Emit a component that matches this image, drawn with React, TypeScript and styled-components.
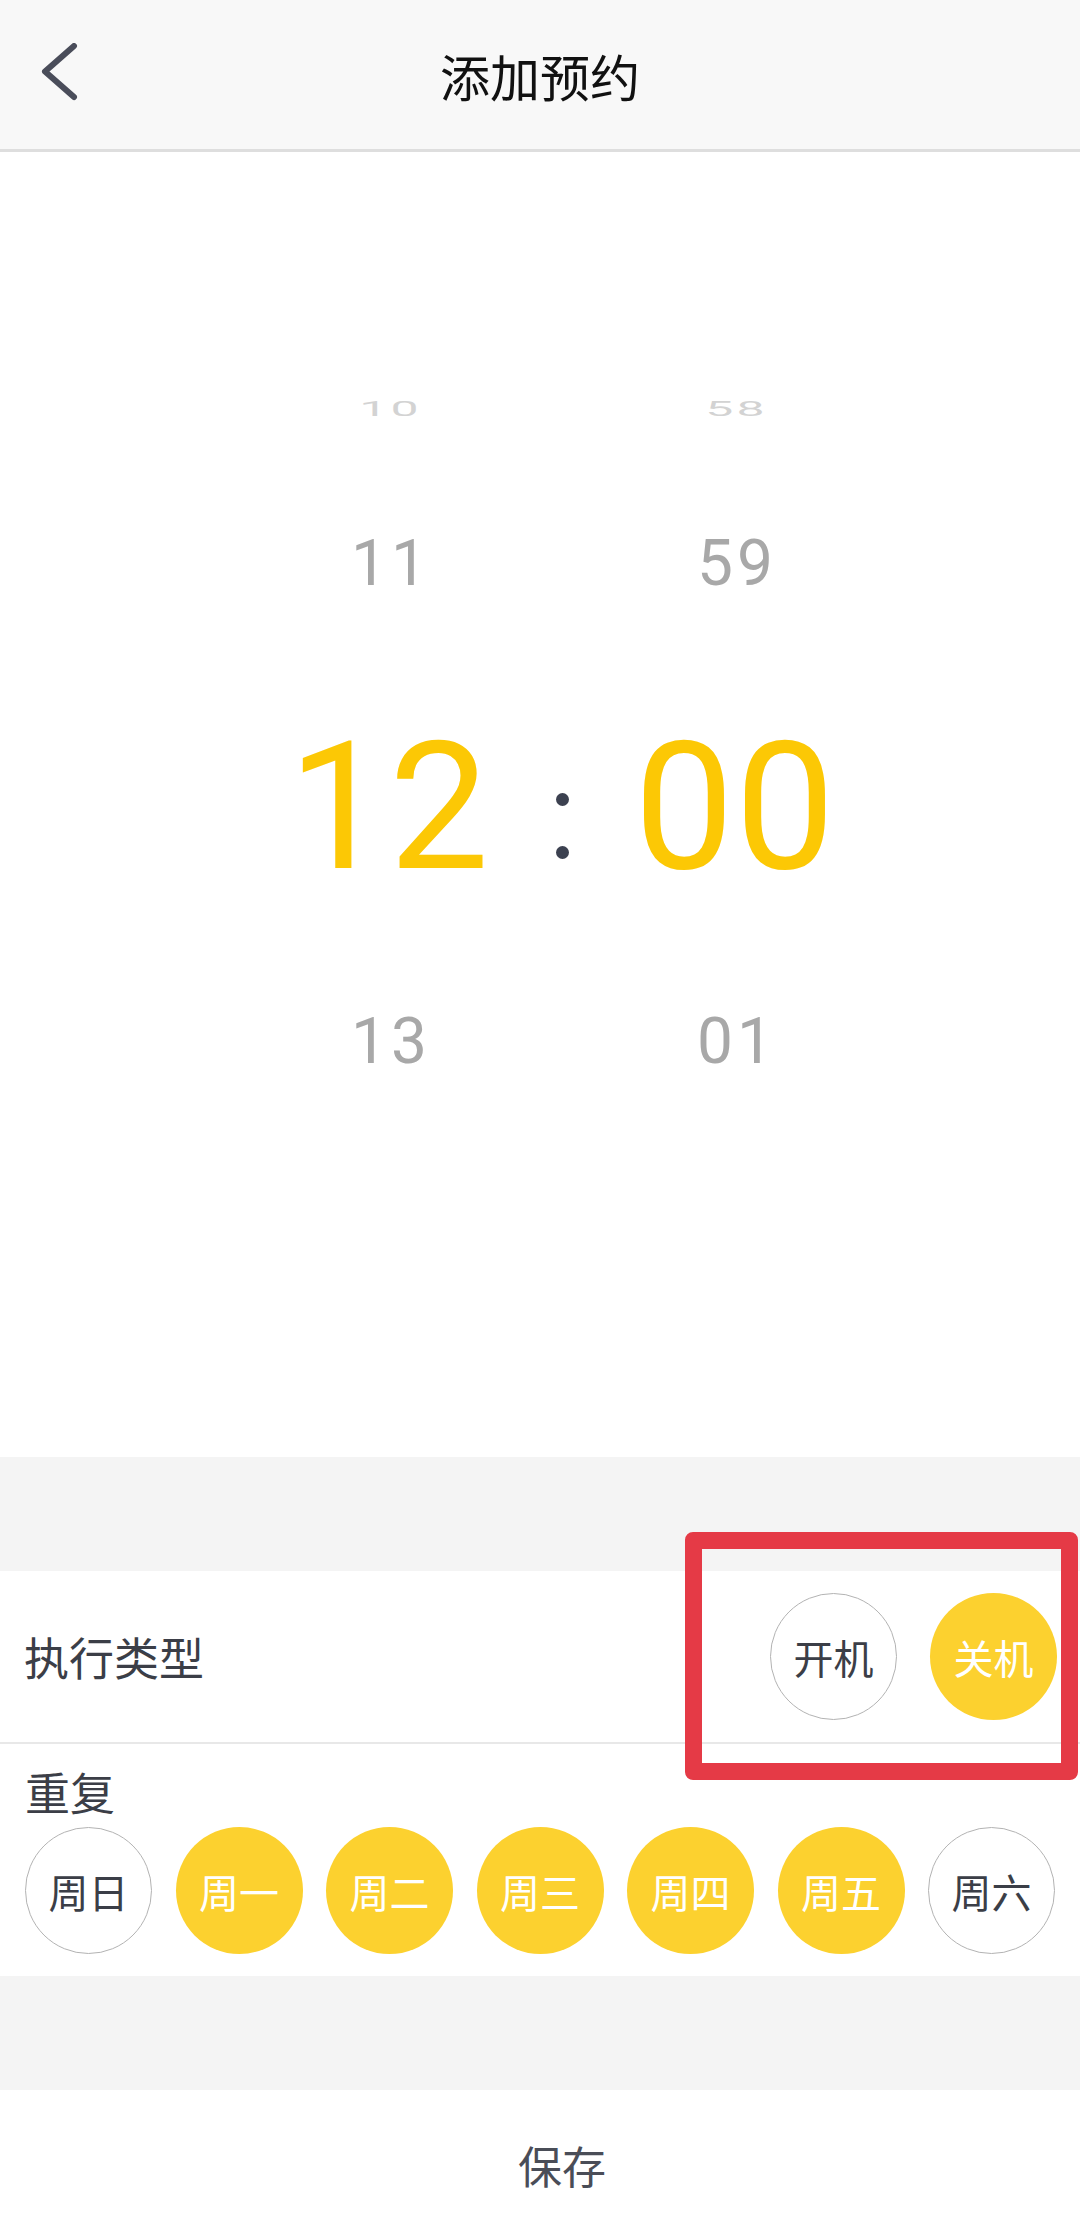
import styled, { createGlobalStyle, css } from "styled-components";

const GlobalStyle = createGlobalStyle`
  html, body {
    margin: 0;
    padding: 0;
    background: #ffffff;
  }
`;

const Page = styled.div`
  position: relative;
  width: 1080px;
  background: #ffffff;
  font-family: "Noto Sans CJK SC", "Noto Sans", sans-serif;
`;

const Header = styled.header`
  display: grid;
  grid-template-columns: 1fr auto 1fr;
  align-items: center;
  height: 152px;
  box-sizing: border-box;
  background: #f8f8f8;
  border-bottom: 3px solid #dedede;
`;

const BackButton = styled.button`
  justify-self: start;
  margin: 0 0 6px 40px;
  padding: 0;
  border: none;
  background: none;
  display: flex;
`;

const Title = styled.h1`
  margin: 0;
  font-size: 50px;
  font-weight: 400;
  color: #111111;
  line-height: 1;
`;

const Picker = styled.section`
  height: 1305px;
  padding-top: 217px;
  box-sizing: border-box;
`;

const WheelRow = styled.div<{ $h: number }>`
  display: grid;
  grid-template-columns: 260px 86px 260px;
  padding-left: 259px;
  height: ${(p) => p.$h}px;
  align-items: center;
  justify-items: center;
`;

const tones = {
  far: css`
    font-size: 64px;
    letter-spacing: 4px;
    padding-left: 4px;
    color: #d3d3d3;
    transform: scale(0.78, 0.32);
  `,
  near: css`
    font-size: 64px;
    letter-spacing: 4px;
    padding-left: 4px;
    color: #a8a8a8;
  `,
  active: css`
    font-size: 178px;
    letter-spacing: 1px;
    color: #fcc805;
  `,
};

const Digit = styled.span<{ $tone: keyof typeof tones }>`
  font-family: Roboto, "Liberation Sans", sans-serif;
  line-height: 1;
  ${(p) => tones[p.$tone]}
`;

const Colon = styled.div`
  display: flex;
  flex-direction: column;
  gap: 40px;
  padding-top: 38px;
`;

const Dot = styled.span`
  width: 13px;
  height: 13px;
  border-radius: 50%;
  background: #3c4150;
`;

const Band = styled.div<{ $h: number }>`
  height: ${(p) => p.$h}px;
  background: #f4f4f4;
`;

const TypeRow = styled.div`
  display: flex;
  align-items: center;
  justify-content: space-between;
  height: 173px;
  padding: 0 23px 0 24px;
  box-sizing: border-box;
  border-bottom: 2px solid #e8e8e8;
`;

const Label = styled.span`
  font-size: 45px;
  line-height: 56px;
  color: #3b3e47;
`;

const ToggleGroup = styled.div`
  display: flex;
  gap: 33px;
`;

const Chip = styled.div<{ $on: boolean }>`
  width: 127px;
  height: 127px;
  border-radius: 50%;
  box-sizing: border-box;
  display: flex;
  align-items: center;
  justify-content: center;
  font-size: 40px;
  line-height: 1;
  ${(p) =>
    p.$on
      ? css`
          background: #fcd12f;
          color: #ffffff;
        `
      : css`
          border: 1.5px solid #b3b3b3;
          color: #3b3e47;
        `}
`;

const RepeatSection = styled.div`
  display: flex;
  flex-direction: column;
  gap: 7px;
  padding: 20px 25px 22px;
`;

const WeekRow = styled.div`
  display: flex;
  justify-content: space-between;
`;

const Save = styled.button`
  display: flex;
  align-items: center;
  justify-content: center;
  width: 100%;
  height: 150px;
  padding: 0 0 0 44px;
  border: none;
  background: #ffffff;
  font-family: inherit;
  font-size: 44px;
  color: #4a4d57;
`;

const Highlight = styled.div`
  position: absolute;
  left: 685px;
  top: 1532px;
  width: 393px;
  height: 248px;
  box-sizing: border-box;
  border: 17px solid #e53a46;
  border-radius: 8px;
  pointer-events: none;
`;

const days = [
  { name: "周日", on: false },
  { name: "周一", on: true },
  { name: "周二", on: true },
  { name: "周三", on: true },
  { name: "周四", on: true },
  { name: "周五", on: true },
  { name: "周六", on: false },
];

export default function App() {
  return (
    <Page>
      <GlobalStyle />
      <Header>
        <BackButton aria-label="返回">
          <svg width="40" height="58" viewBox="0 0 40 58">
            <path
              d="M34 3 L5 28.5 L34 54"
              fill="none"
              stroke="#4a4d5a"
              strokeWidth="6"
              strokeLinecap="round"
              strokeLinejoin="round"
            />
          </svg>
        </BackButton>
        <Title>添加预约</Title>
        <span />
      </Header>

      <Picker>
        <WheelRow $h={80}>
          <Digit $tone="far">10</Digit>
          <span />
          <Digit $tone="far">58</Digit>
        </WheelRow>
        <WheelRow $h={230}>
          <Digit $tone="near">11</Digit>
          <span />
          <Digit $tone="near">59</Digit>
        </WheelRow>
        <WheelRow $h={256}>
          <Digit $tone="active">12</Digit>
          <Colon>
            <Dot />
            <Dot />
          </Colon>
          <Digit $tone="active">00</Digit>
        </WheelRow>
        <WheelRow $h={214}>
          <Digit $tone="near">13</Digit>
          <span />
          <Digit $tone="near">01</Digit>
        </WheelRow>
      </Picker>

      <Band $h={114} />
      <TypeRow>
        <Label>执行类型</Label>
        <ToggleGroup>
          <Chip $on={false}>开机</Chip>
          <Chip $on={true}>关机</Chip>
        </ToggleGroup>
      </TypeRow>
      <RepeatSection>
        <Label>重复</Label>
        <WeekRow>
          {days.map((d) => (
            <Chip key={d.name} $on={d.on}>
              {d.name}
            </Chip>
          ))}
        </WeekRow>
      </RepeatSection>
      <Band $h={114} />
      <Save>保存</Save>

      <Highlight />
    </Page>
  );
}
